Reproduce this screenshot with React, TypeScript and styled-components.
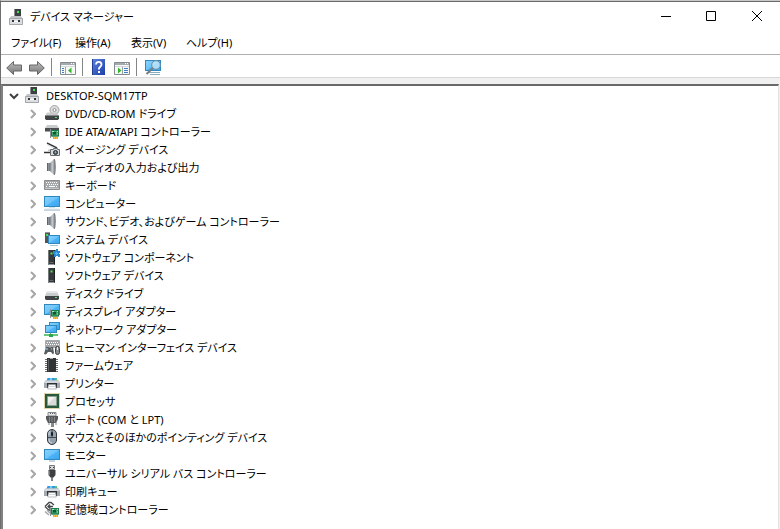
import React from "react";
import styled, { createGlobalStyle } from "styled-components";

const GlobalStyle = createGlobalStyle`
  * { box-sizing: border-box; }
  body {
    margin: 0;
    background: #fff;
    color: #000;
    font-family: "Noto Sans", "Noto Sans CJK JP", sans-serif;
    font-size: 11px;
    line-height: 18px;
    font-feature-settings: "palt";
  }
  button { font: inherit; color: inherit; font-feature-settings: inherit; }
`;

const Window = styled.div`
  display: flex;
  flex-direction: column;
  min-height: 100vh;
  border-top: 1px solid #c8c8c8;
  border-left: 1px solid #6e6e6e;
  background: #fff;
`;

const TitleBar = styled.header`
  display: flex;
  align-items: center;
  height: 30px;
  padding-left: 8px;
  border-top: 1px solid #6a6a6a;
`;

const Title = styled.h1`
  flex: 1;
  margin: 0;
  padding-left: 5px;
  font-size: 11px;
  font-weight: 400;
`;

const PlainButton = styled.button`
  display: flex;
  align-items: center;
  justify-content: center;
  padding: 0;
  border: 0;
  background: transparent;
`;

const CaptionButton = styled(PlainButton)`
  width: 46px;
  height: 28px;
`;

const MenuBar = styled.nav`
  display: grid;
  grid-template-columns: 64px 56px 55px 60px;
  height: 24px;
  padding-left: 10px;
  border-bottom: 1px solid #b0b0b0;
`;

const MenuButton = styled(PlainButton)`
  justify-content: flex-start;
  white-space: nowrap;
`;

const ToolBar = styled.div`
  display: flex;
  align-items: center;
  height: 23px;
  padding: 2px 0 0 5px;
  border-bottom: 1px solid #d8d8d8;
`;

const ToolButton = styled(PlainButton)<{ $gap?: number }>`
  width: 16px;
  height: 18px;
  margin-right: ${(p) => p.$gap ?? 6}px;
`;

const Separator = styled.span`
  width: 1px;
  height: 18px;
  margin-right: 8px;
  background: #858585;
`;

const Content = styled.main`
  display: flex;
  flex: 1;
  padding: 6px 1px 0 0;
  background: #f0f0f0;
`;

const Panel = styled.div`
  flex: 1;
  border-top: 2px solid #696969;
  border-left: 2px solid #828282;
  border-right: 1px solid #e3e3e3;
  background: #fff;
`;

const Tree = styled.ul`
  margin: 0;
  padding: 0;
  list-style: none;
`;

const Row = styled.div<{ $child?: boolean }>`
  display: flex;
  align-items: center;
  height: 18px;
  padding-left: ${(p) => (p.$child ? 23 : 3)}px;
`;

const Toggle = styled(PlainButton)<{ $wide?: boolean }>`
  width: ${(p) => (p.$wide ? 15 : 14)}px;
  height: 18px;
  margin-right: 4px;
  padding-top: 2px;
`;

const Label = styled.span`
  padding: 1px 0 0 5px;
  white-space: nowrap;
`;

const Svg = styled.svg`
  display: block;
  flex: none;
`;

const Icon = ({ children }: { children: React.ReactNode }) => (
  <Svg width="16" height="16" viewBox="0 0 16 16" aria-hidden="true">{children}</Svg>
);

const Gradients = () => (
  <Svg width="0" height="0" aria-hidden="true">
    <defs>
      <linearGradient id="screen" x1="0" y1="0" x2="1" y2="1">
        <stop offset="0" stopColor="#8ad2fb" />
        <stop offset="0.5" stopColor="#6cc4fa" />
        <stop offset="0.52" stopColor="#4db4f6" />
        <stop offset="1" stopColor="#38a6f0" />
      </linearGradient>
      <linearGradient id="metal" x1="0" y1="0" x2="1" y2="0">
        <stop offset="0" stopColor="#6a7078" />
        <stop offset="0.5" stopColor="#c9cdd1" />
        <stop offset="1" stopColor="#7c8289" />
      </linearGradient>
      <linearGradient id="arrow" x1="0" y1="0" x2="0" y2="1">
        <stop offset="0" stopColor="#bdbdbd" />
        <stop offset="1" stopColor="#777" />
      </linearGradient>
      <linearGradient id="help" x1="0" y1="0" x2="1" y2="1">
        <stop offset="0" stopColor="#5f86dd" />
        <stop offset="1" stopColor="#1c3da8" />
      </linearGradient>
    </defs>
  </Svg>
);

const Card = () => (
  <g>
    <path d="M6.500 6v9" stroke="#8b9196" />
    <path d="M7 7h8v6.500H7z" fill="#3fa36e" />
    <path d="M7.500 7.500h7v5.500h-7z" fill="none" stroke="#1f7a49" />
    <path d="M9 9h3v2.500H9z" fill="#14532f" />
    <path d="M13 8.500h1M13 11h1M8 8.500h2" stroke="#a6e5b9" />
    <path d="M9 14h5v2H9z" fill="#efa51f" />
    <path d="M10.500 14v2M12.500 14v2" stroke="#ffdb70" strokeWidth=".5" />
  </g>
);

const Screen = ({ x = 0, y = 2, w = 16, h = 10 }: { x?: number; y?: number; w?: number; h?: number }) => (
  <rect x={x + 0.5} y={y + 0.5} width={w - 1} height={h - 1} fill="url(#screen)" stroke="#2f88c0" />
);

const Host = () => (
  <Icon>
    <path d="M5 0h7v8H5z" fill="#3d4042" />
    <path d="M5 0h1v8H5z" fill="#8b8f92" />
    <path d="M8 2h2v2H8z" fill="#3be456" />
    <path d="M2 7h10l1.500 2.500v6H.500v-6z" fill="#c3c7cb" />
    <path d="M.500 9.500h13v6H.500z" fill="#dcdfe2" stroke="#a2a7ab" />
    <path d="M3 11h2v2H3zM9 11h2v2H9z" fill="#333" />
    <path d="M5 12.500h4" stroke="#fff" />
  </Icon>
);

const Speaker = () => (
  <Icon>
    <path d="M3 4h3.500v8H3z" fill="#8c9298" />
    <path d="M3 4h1v8H3z" fill="#5d646b" />
    <path d="M5.500 4.500 10 0h1v16h-1l-4.500-4.500z" fill="url(#metal)" />
    <path d="M10.500.500c1 3 1 12 0 15" fill="none" stroke="#70777e" />
  </Icon>
);

const Tower = () => (
  <g>
    <path d="M4 1h7v14.500H4z" fill="#36393b" />
    <path d="M4 1h1v14.500H4z" fill="#75797c" />
    <path d="M10 1h1v14.500h-1z" fill="#1f2122" />
    <path d="M6.500 3.500h2v2h-2z" fill="#50e44e" />
    <path d="M5.500 13.500h4" stroke="#63676a" />
  </g>
);

const PrinterIcon = () => (
  <Icon>
    <path d="M3.500 3h9l1 3h-11z" fill="#2f98e0" />
    <path d="M6 3h2v3H5.500z" fill="#7ac9f6" />
    <path d="M10.500 3h2l1 3h-2.500z" fill="#58be72" />
    <path d="M1.500 5.500h13l1.500 2v5.500H0V7.500z" fill="#a3a9ae" />
    <path d="M1.500 5.500h13L16 8H0z" fill="#d3d8dc" />
    <path d="M3 8h10v5H3z" fill="#2e3235" />
    <path d="M4.500 9.500h7l.8 4.500H3.700z" fill="#fff" stroke="#8b9195" strokeWidth=".600" />
    <path d="M5 11.500h6" stroke="#d5d9dc" />
  </Icon>
);

const icons = {
  dvd: (
    <Icon>
      <circle cx="10.500" cy="5" r="4.500" fill="#dcdddd" stroke="#a3a5a6" />
      <circle cx="10.500" cy="5" r="1.500" fill="#fff" stroke="#8d8f90" />
      <path d="M3 7.500h10l2 3.500H1z" fill="#c4c7c8" fillOpacity=".9" />
      <path d="M1 10.500h14v3l-1 1.500H2L1 13.500z" fill="#414447" />
      <path d="M11 12.500h2" stroke="#50e956" />
    </Icon>
  ),
  ide: (
    <Icon>
      <path d="M3 2h10l2 3H1z" fill="#c9cccd" />
      <path d="M1 5h14v3.500H1z" fill="#4a4e51" />
      <Card />
    </Icon>
  ),
  imaging: (
    <Icon>
      <path d="M3 2 13 7" stroke="#3c3f41" strokeWidth="1.500" />
      <path d="M3 3.500 12 8" stroke="#d5d8da" />
      <path d="M0 11.500h7" stroke="#303335" strokeWidth="1.500" />
      <path d="M4 8.500h4v2H4z" fill="#c4c8ca" />
      <path d="M6.500 8.500h3v-1h4v1h2v6h-9z" fill="#d7dadc" stroke="#666c70" />
      <circle cx="11.500" cy="11.500" r="2" fill="#64737c" stroke="#272d31" />
      <path d="M11 10.500h1v1h-1z" fill="#9be3fd" />
    </Icon>
  ),
  speaker: <Speaker />,
  keyboard: (
    <Icon>
      <path d="M.500 3.500h15v9H.500z" fill="#a4a8ab" stroke="#898d90" />
      <path d="M2 5.500h12M3 7.500h11M2 9.500h2M5 9.500h6M12 9.500h2" stroke="#fff" strokeDasharray="1 1" />
      <path d="M5 9.500h6" stroke="#fff" />
      <path d="M1 11.500h14" stroke="#c5c8ca" />
    </Icon>
  ),
  computer: (
    <Icon>
      <Screen y={1} h={11} />
      <path d="M5 12h6v1H5z" fill="#d5e1e8" />
      <path d="M0 15h16" stroke="#8caabd" />
      <path d="M1 14h14" stroke="#d8e3e9" />
    </Icon>
  ),
  system: (
    <Icon>
      <path d="M1 1h5v11H1z" fill="#505558" />
      <path d="M1 1h5v1H1z" fill="#929799" />
      <path d="M2 3h2v2H2z" fill="#4bdc53" />
      <Screen x={4} y={4} w={12} h={9} />
      <path d="M6 14.500h8" stroke="#a6c4d5" />
    </Icon>
  ),
  component: (
    <Icon>
      <Tower />
      <path d="M9 2h2V1h1V0h2v2h2v2h-1v1h1v3h-2V7h-2v1h-2V5H9z" fill="#278bd3" />
      <path d="M11 4.500h3M12.500 3v3" stroke="#5db4ec" />
    </Icon>
  ),
  software: <Icon><Tower /></Icon>,
  disk: (
    <Icon>
      <path d="M3 6.500h10l2 4.500H1z" fill="#c9cccd" />
      <path d="M3 6.500h10l.6 1.500H2.400z" fill="#e7e9e9" />
      <path d="M1 11h14v3l-1 1H2l-1-1z" fill="#414447" />
      <path d="M11 12.500h2" stroke="#50e956" />
    </Icon>
  ),
  display: (
    <Icon>
      <Screen y={1} h={11} />
      <Card />
    </Icon>
  ),
  network: (
    <Icon>
      <Screen x={5} y={1} w={11} h={8} />
      <Screen x={1} y={4} w={12} h={8} />
      <path d="M6.500 12v2" stroke="#57b86d" />
      <path d="M0 14h14" stroke="#69c77d" strokeWidth="2" />
      <path d="M5 13h4v3H5z" fill="#2fa64e" />
    </Icon>
  ),
  hid: (
    <Icon>
      <path d="M1.500 1.500h14v7h-14z" fill="#a0a4a7" stroke="#a7aaad" />
      <path d="M3 3.500h12M2 5.500h13" stroke="#fff" strokeDasharray="1 1" />
      <path d="M2 8h3l1 1 1-1h2l1 6-1 1.500L7 13H4l-2 2.500L0 15z" fill="#565c60" />
      <path d="M2 10h2M7 10h1" stroke="#9cd7fb" />
      <rect x="11.500" y="7.500" width="4" height="8" rx="2" fill="#858b8f" stroke="#3a3f42" />
      <path d="M13.500 8v3" stroke="#eee" />
    </Icon>
  ),
  firmware: (
    <Icon>
      <path d="M1 2.500h13M1 4.500h13M1 6.500h13M1 8.500h13M1 10.500h13M1 12.500h13M1 14.500h13" stroke="#6c6f71" />
      <path d="M3 1h3v1h3V1h3v14H3z" fill="#303234" />
      <path d="M4 2h1v12H4z" fill="#5b5e60" />
      <path d="M6 1h3v1H6z" fill="#aaa" />
    </Icon>
  ),
  printer: <PrinterIcon />,
  processor: (
    <Icon>
      <path d="M1 1h14v14H1z" fill="#275a3d" />
      <path d="M.500.500h15v15H.500z" fill="none" stroke="#c0a654" strokeDasharray="1 1" />
      <path d="M3.500 3.500h9v9h-9z" fill="#d9dbd8" stroke="#8ba091" />
      <path d="M4 4h7L4 11z" fill="#f2f3f0" />
    </Icon>
  ),
  port: (
    <Icon>
      <path d="M4 1.500h8v3.500H4z" fill="#e1e3e4" stroke="#85898c" />
      <path d="M6 2.500h5" stroke="#666" strokeDasharray="1 1" />
      <path d="M2 5h12v3l-2 4H4L2 8z" fill="#55595c" />
      <path d="M5.500 6v5M8 6v5M10.500 6v5" stroke="#888c8f" />
      <path d="M7 12h3v4H7z" fill="#85898c" />
      <path d="M5 12v2M12 11v3" stroke="#888" />
    </Icon>
  ),
  mouse: (
    <Icon>
      <rect x="3.500" y=".500" width="9" height="15" rx="4.500" fill="#94a1ae" stroke="#343a40" />
      <path d="M8 1v7M4 8.500h8" stroke="#424b54" />
      <path d="M5 10c0 3 1 4 3 4" fill="none" stroke="#d3dbe2" />
      <rect x="7" y="3" width="2" height="4" rx="1" fill="#1a1e22" />
      <path d="M5 6V4l1-2" fill="none" stroke="#cfd9e1" />
    </Icon>
  ),
  monitor: (
    <Icon>
      <Screen y={2} h={11} />
      <path d="M5 14h6" stroke="#8caabd" />
    </Icon>
  ),
  usb: (
    <Icon>
      <path d="M5.500.500h5v4h-5z" fill="#d4d6d7" stroke="#777b7e" />
      <path d="M6 2h1v1H6zM9 2h1v1H9z" fill="#444" />
      <path d="M4.500 5h7v5l-2 2.500h-3L4.500 10z" fill="#3e4144" />
      <path d="M5.500 6v4" stroke="#777b7e" />
      <path d="M8 12v4" stroke="#55585b" strokeWidth="1.500" />
    </Icon>
  ),
  storage: (
    <Icon>
      <path d="M1 5.500 5 1.500h2L10 4M1 5.500 5 9.500 7 8M4 5.500h5M6 3.500 4 5.500l2 2" fill="none" stroke="#44484a" strokeWidth="1.300" />
      <path d="M1 10.500 5 14M3 9l3 3" stroke="#a2a6a8" strokeWidth="1.500" />
      <Card />
    </Icon>
  ),
};

const devices: { icon: keyof typeof icons; name: string }[] = [
  { icon: "dvd", name: "DVD/CD-ROM ドライブ" },
  { icon: "ide", name: "IDE ATA/ATAPI コントローラー" },
  { icon: "imaging", name: "イメージング デバイス" },
  { icon: "speaker", name: "オーディオの入力および出力" },
  { icon: "keyboard", name: "キーボード" },
  { icon: "computer", name: "コンピューター" },
  { icon: "speaker", name: "サウンド、ビデオ、およびゲーム コントローラー" },
  { icon: "system", name: "システム デバイス" },
  { icon: "component", name: "ソフトウェア コンポーネント" },
  { icon: "software", name: "ソフトウェア デバイス" },
  { icon: "disk", name: "ディスク ドライブ" },
  { icon: "display", name: "ディスプレイ アダプター" },
  { icon: "network", name: "ネットワーク アダプター" },
  { icon: "hid", name: "ヒューマン インターフェイス デバイス" },
  { icon: "firmware", name: "ファームウェア" },
  { icon: "printer", name: "プリンター" },
  { icon: "processor", name: "プロセッサ" },
  { icon: "port", name: "ポート (COM と LPT)" },
  { icon: "mouse", name: "マウスとそのほかのポインティング デバイス" },
  { icon: "monitor", name: "モニター" },
  { icon: "usb", name: "ユニバーサル シリアル バス コントローラー" },
  { icon: "printer", name: "印刷キュー" },
  { icon: "storage", name: "記憶域コントローラー" },
];

const ARROW = "M.700 9 7.500 2.500v3.500h8v6h-8v3.500z";

const PaneIcon = ({ right }: { right?: boolean }) => (
  <Icon>
    <path d="M.500 3.500h15v12H.500z" fill="#f7f8f8" stroke="#858b8f" />
    <path d="M1 4h14v2H1z" fill="#a4abb0" />
    <path d="M11 4.500h3" stroke="#fff" strokeDasharray="1 1" />
    <path d="M1 7.500h14" stroke="#d4d8db" />
    <path d={right ? "M8.500 8v7" : "M5.500 8v7"} stroke="#9ba1a5" />
    <path
      d={right ? "M10 9.500h4M10 11.500h4M10 13.500h4" : "M2 9.500h2M2 11.500h2M2 13.500h2"}
      stroke="#3d7fc4"
    />
    <path d={right ? "M4 8.500v6l3.500-3z" : "M11.500 8.500v6L8 11.500z"} fill="#35b52c" />
  </Icon>
);

export default function App() {
  return (
    <Window>
      <GlobalStyle />
      <TitleBar>
        <Host />
        <Title>デバイス マネージャー</Title>
        <CaptionButton aria-label="最小化">
          <Svg width="11" height="11"><path d="M1 5.500h10" stroke="#000" /></Svg>
        </CaptionButton>
        <CaptionButton aria-label="最大化">
          <Svg width="11" height="11"><path d="M.500.500h9v9h-9z" fill="none" stroke="#000" /></Svg>
        </CaptionButton>
        <CaptionButton aria-label="閉じる">
          <Svg width="11" height="11"><path d="m0 0 10 10M10 0 0 10" stroke="#000" /></Svg>
        </CaptionButton>
      </TitleBar>
      <MenuBar>
        <MenuButton>ファイル(F)</MenuButton>
        <MenuButton>操作(A)</MenuButton>
        <MenuButton>表示(V)</MenuButton>
        <MenuButton>ヘルプ(H)</MenuButton>
      </MenuBar>
      <ToolBar>
        <Gradients />
        <ToolButton aria-label="戻る" $gap={7}>
          <Icon><path d={ARROW} fill="url(#arrow)" stroke="#666" /></Icon>
        </ToolButton>
        <ToolButton aria-label="進む">
          <Icon><path d={ARROW} transform="matrix(-1 0 0 1 16 0)" fill="url(#arrow)" stroke="#666" /></Icon>
        </ToolButton>
        <Separator />
        <ToolButton aria-label="コンソール ツリーの表示"><PaneIcon /></ToolButton>
        <Separator />
        <ToolButton aria-label="ヘルプ" $gap={7}>
          <Icon>
            <path d="M1 0h13v16H1z" fill="url(#help)" />
            <path d="M1 0h1v16H1z" fill="#203f91" />
            <path d="M5 5.500C5 2 10.500 2 10.500 5.500 10.500 8 7.800 7.500 7.800 10.500" fill="none" stroke="#fff" strokeWidth="1.800" />
            <path d="M7 12h2v2H7z" fill="#fff" />
          </Icon>
        </ToolButton>
        <ToolButton aria-label="操作ウィンドウの表示"><PaneIcon right /></ToolButton>
        <Separator />
        <ToolButton aria-label="ハードウェア変更のスキャン">
          <Icon>
            <Screen y={1} h={11} />
            <path d="M4 13.500h11M5 15.500h10" stroke="#8caabd" />
            <path d="M8 9 1.500 15" stroke="#777e83" strokeWidth="2" />
            <circle cx="11" cy="6" r="4.300" fill="#c4e8fc" fillOpacity=".8" stroke="#6f8c9e" />
          </Icon>
        </ToolButton>
      </ToolBar>
      <Content>
        <Panel>
          <Tree role="tree">
            <li role="treeitem" aria-expanded="true">
              <Row>
                <Toggle $wide aria-label="折りたたむ">
                  <Svg width="10" height="7"><path d="m1 1 4 4 4-4" fill="none" stroke="#404040" strokeWidth="2" /></Svg>
                </Toggle>
                <Host />
                <Label>DESKTOP-SQM17TP</Label>
              </Row>
              <Tree role="group">
                {devices.map((d) => (
                  <li role="treeitem" aria-expanded="false" key={d.name}>
                    <Row $child>
                      <Toggle aria-label={`${d.name} を展開`}>
                        <Svg width="6" height="10"><path d="m1 1 4 4-4 4" fill="none" stroke="#a6a6a6" strokeWidth="2" /></Svg>
                      </Toggle>
                      {icons[d.icon]}
                      <Label>{d.name}</Label>
                    </Row>
                  </li>
                ))}
              </Tree>
            </li>
          </Tree>
        </Panel>
      </Content>
    </Window>
  );
}
